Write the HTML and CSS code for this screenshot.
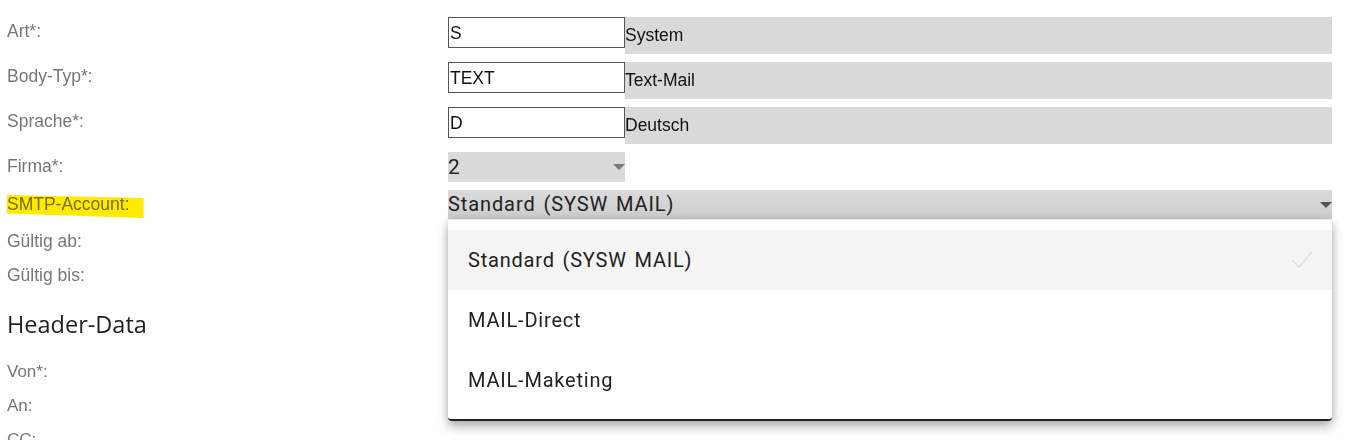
FILE: index.html
```html
<!DOCTYPE html>
<html lang="de">
<head>
<meta charset="utf-8">
<title>Mail-Vorlage</title>
<link rel="stylesheet" href="styles.css">
</head>
<body>
<main class="form">
  <div class="row">
    <label class="lbl">Art*:</label>
    <div class="field">
      <input class="code" type="text" value="S">
      <div class="desc">System</div>
    </div>
  </div>
  <div class="row">
    <label class="lbl">Body-Typ*:</label>
    <div class="field">
      <input class="code" type="text" value="TEXT">
      <div class="desc">Text-Mail</div>
    </div>
  </div>
  <div class="row">
    <label class="lbl">Sprache*:</label>
    <div class="field">
      <input class="code" type="text" value="D">
      <div class="desc">Deutsch</div>
    </div>
  </div>
  <div class="row">
    <label class="lbl">Firma*:</label>
    <div class="field">
      <div class="select select-short"><span>2</span><i class="caret"></i></div>
    </div>
  </div>
  <div class="row">
    <label class="lbl"><span class="marked">SMTP-Account:</span></label>
    <div class="field">
      <div class="select select-wide">
        <span>Standard (SYSW MAIL)</span><i class="caret caret-dark"></i>
        <ul class="menu">
          <li class="item active">
            <span>Standard (SYSW MAIL)</span>
            <svg class="check" width="22" height="18" viewBox="0 0 22 18"><path d="M1 9 L8 16 L21 1" fill="none" stroke="#dcdcdc" stroke-width="1.4"/></svg>
          </li>
          <li class="item"><span>MAIL-Direct</span></li>
          <li class="item"><span>MAIL-Maketing</span></li>
        </ul>
      </div>
    </div>
  </div>
  <div class="row">
    <label class="lbl">Gültig ab:</label>
    <div class="field"></div>
  </div>
  <div class="row">
    <label class="lbl">Gültig bis:</label>
    <div class="field"></div>
  </div>

  <h2 class="section">Header-Data</h2>

  <div class="row">
    <label class="lbl lbl-sm">Von*:</label>
    <div class="field"></div>
  </div>
  <div class="row">
    <label class="lbl lbl-sm">An:</label>
    <div class="field"></div>
  </div>
  <div class="row">
    <label class="lbl lbl-sm">CC:</label>
    <div class="field"></div>
  </div>
</main>
</body>
</html>
```
FILE: styles.css
```css
html, body {
  margin: 0;
  background: #fff;
  overflow: hidden;
}

body {
  font-family: "Liberation Sans", Arial, sans-serif;
  color: #111;
}

.form {
  padding: 17px 0 0 7px;
}

.row {
  display: grid;
  grid-template-columns: 441px 884px;
  min-height: 26px;
  margin-bottom: 8px;
}

.lbl {
  font-size: 17.5px;
  line-height: 20px;
  color: #777;
  padding-top: 4px;
}

.lbl-sm {
  font-size: 17px;
}

/* yellow highlighter stroke over the label */
.marked {
  position: relative;
  display: inline-block;
  height: 20px;
}

.marked::after {
  content: "";
  position: absolute;
  left: 0;
  right: -14px;
  top: 1px;
  bottom: -4px;
  background: #ffea00;
  mix-blend-mode: multiply;
  clip-path: polygon(0 0, 100% 13%, 100% 100%, 0 80%);
}

.field {
  position: relative;
  display: flex;
  align-items: flex-start;
}

.code {
  box-sizing: border-box;
  width: 177px;
  height: 31px;
  margin: 0;
  padding: 1px 1px 0;
  border: 1px solid #555;
  border-radius: 0;
  background: #fff;
  font: 17.5px "Liberation Sans", Arial, sans-serif;
  color: #111;
  outline: none;
}

.desc {
  box-sizing: border-box;
  width: 707px;
  height: 37px;
  padding-top: 8px;
  background: #d9d9d9;
  font-size: 17.5px;
  line-height: 20px;
  color: #111;
}

.select {
  position: relative;
  box-sizing: border-box;
  font-family: Roboto, "Liberation Sans", sans-serif;
  color: #222;
}

.select-short {
  width: 177px;
  height: 30px;
  background: #d9d9d9;
  font-size: 21px;
  line-height: 30px;
}

.select-wide {
  width: 884px;
  height: 29px;
  background: linear-gradient(#dadada, #cdcdcd);
  font-size: 20px;
  line-height: 29px;
  letter-spacing: 0.9px;
  word-spacing: 2px;
}

.caret {
  position: absolute;
  right: 0;
  top: 12px;
  width: 0;
  height: 0;
  border-left: 6px solid transparent;
  border-right: 6px solid transparent;
  border-top: 6px solid #7a7a7a;
}

.caret-dark {
  top: 12px;
  border-top-color: #555;
}

/* open option list of the SMTP account select */
.menu {
  position: absolute;
  left: 0;
  top: 30px;
  z-index: 2;
  box-sizing: border-box;
  width: 884px;
  margin: 0;
  padding: 10px 0 9px;
  list-style: none;
  background: #fff;
  border-bottom: 2px solid #222;
  border-radius: 0 0 4px 4px;
  box-shadow: 0 6px 12px rgba(0, 0, 0, 0.28), 0 0 8px rgba(0, 0, 0, 0.14);
}

.item {
  display: flex;
  align-items: center;
  justify-content: space-between;
  height: 60px;
  padding: 0 19px 0 20px;
  font-size: 20px;
  letter-spacing: 0.8px;
  word-spacing: 2px;
  color: #222;
}

.item.active {
  background: #f4f4f4;
}

.check {
  display: block;
}

.section {
  margin: 21px 0 18px;
  font-family: "Open Sans", sans-serif;
  font-size: 23.5px;
  font-weight: 400;
  line-height: 32px;
  color: #222;
}
```
